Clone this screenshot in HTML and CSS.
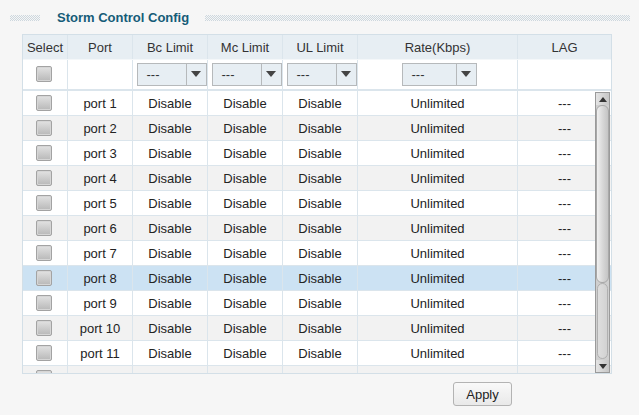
FILE: index.html
```html
<!DOCTYPE html>
<html>
<head>
<meta charset="utf-8">
<link rel="stylesheet" href="styles.css">
</head>
<body>
<div class="page">
  <div class="titlebar">
    <span class="dots dots-left"></span>
    <span class="title">Storm Control Config</span>
    <span class="dots dots-right"></span>
  </div>
  <div class="grid">
    <div class="row head">
      <div class="cell">Select</div>
      <div class="cell">Port</div>
      <div class="cell">Bc Limit</div>
      <div class="cell">Mc Limit</div>
      <div class="cell">UL Limit</div>
      <div class="cell">Rate(Kbps)</div>
      <div class="cell">LAG</div>
    </div>
    <div class="row filter">
      <div class="cell"><span class="chk"></span></div>
      <div class="cell"></div>
      <div class="cell"><span class="sel"><span class="sel-val">---</span><span class="sel-btn"><span class="tri"></span></span></span></div>
      <div class="cell"><span class="sel"><span class="sel-val">---</span><span class="sel-btn"><span class="tri"></span></span></span></div>
      <div class="cell"><span class="sel"><span class="sel-val">---</span><span class="sel-btn"><span class="tri"></span></span></span></div>
      <div class="cell"><span class="sel sel-wide"><span class="sel-val">---</span><span class="sel-btn"><span class="tri"></span></span></span></div>
      <div class="cell"></div>
    </div>
    <div class="body">
      <div class="row"><div class="cell"><span class="chk"></span></div><div class="cell">port 1</div><div class="cell">Disable</div><div class="cell">Disable</div><div class="cell">Disable</div><div class="cell">Unlimited</div><div class="cell">---</div></div>
      <div class="row alt"><div class="cell"><span class="chk"></span></div><div class="cell">port 2</div><div class="cell">Disable</div><div class="cell">Disable</div><div class="cell">Disable</div><div class="cell">Unlimited</div><div class="cell">---</div></div>
      <div class="row"><div class="cell"><span class="chk"></span></div><div class="cell">port 3</div><div class="cell">Disable</div><div class="cell">Disable</div><div class="cell">Disable</div><div class="cell">Unlimited</div><div class="cell">---</div></div>
      <div class="row alt"><div class="cell"><span class="chk"></span></div><div class="cell">port 4</div><div class="cell">Disable</div><div class="cell">Disable</div><div class="cell">Disable</div><div class="cell">Unlimited</div><div class="cell">---</div></div>
      <div class="row"><div class="cell"><span class="chk"></span></div><div class="cell">port 5</div><div class="cell">Disable</div><div class="cell">Disable</div><div class="cell">Disable</div><div class="cell">Unlimited</div><div class="cell">---</div></div>
      <div class="row alt"><div class="cell"><span class="chk"></span></div><div class="cell">port 6</div><div class="cell">Disable</div><div class="cell">Disable</div><div class="cell">Disable</div><div class="cell">Unlimited</div><div class="cell">---</div></div>
      <div class="row"><div class="cell"><span class="chk"></span></div><div class="cell">port 7</div><div class="cell">Disable</div><div class="cell">Disable</div><div class="cell">Disable</div><div class="cell">Unlimited</div><div class="cell">---</div></div>
      <div class="row hl"><div class="cell"><span class="chk"></span></div><div class="cell">port 8</div><div class="cell">Disable</div><div class="cell">Disable</div><div class="cell">Disable</div><div class="cell">Unlimited</div><div class="cell">---</div></div>
      <div class="row"><div class="cell"><span class="chk"></span></div><div class="cell">port 9</div><div class="cell">Disable</div><div class="cell">Disable</div><div class="cell">Disable</div><div class="cell">Unlimited</div><div class="cell">---</div></div>
      <div class="row alt"><div class="cell"><span class="chk"></span></div><div class="cell">port 10</div><div class="cell">Disable</div><div class="cell">Disable</div><div class="cell">Disable</div><div class="cell">Unlimited</div><div class="cell">---</div></div>
      <div class="row"><div class="cell"><span class="chk"></span></div><div class="cell">port 11</div><div class="cell">Disable</div><div class="cell">Disable</div><div class="cell">Disable</div><div class="cell">Unlimited</div><div class="cell">---</div></div>
      <div class="row alt"><div class="cell"><span class="chk"></span></div><div class="cell">port 12</div><div class="cell">Disable</div><div class="cell">Disable</div><div class="cell">Disable</div><div class="cell">Unlimited</div><div class="cell">---</div></div>
      <div class="scrollbar">
        <div class="sb-btn"><span class="sb-up"></span></div>
        <div class="sb-track">
          <div class="sb-thumb"></div>
          <div class="sb-rest"></div>
        </div>
        <div class="sb-btn"><span class="sb-down"></span></div>
      </div>
    </div>
  </div>
  <div class="footer">
    <button class="btn">Apply</button>
  </div>
</div>
</body>
</html>
```

FILE: styles.css
```css
* { box-sizing: border-box; }
html, body {
  margin: 0;
  padding: 0;
  background: #f6f6f6;
  font-family: "Liberation Sans", Arial, sans-serif;
  font-size: 13px;
  color: #2a2a2a;
}
.page {
  width: 639px;
  height: 415px;
  overflow: hidden;
}
.titlebar {
  display: flex;
  align-items: center;
  height: 34px;
  padding: 0 9px 0 10px;
}
.dots {
  height: 6px;
  background: conic-gradient(#cdd7de 25%, transparent 0 50%, #cdd7de 0 75%, transparent 0) 0 0 / 2px 2px;
  margin-top: 2px;
}
.dots-left { width: 30px; }
.dots-right { flex: 1; }
.title {
  font-weight: bold;
  font-size: 13px;
  color: #155c78;
  padding: 0 16px 0 17px;
}
.grid {
  margin-left: 22px;
  width: 590px;
  border: 1px solid #d3dfe7;
  background: #fff;
}
.row {
  display: grid;
  grid-template-columns: 45px 65px 75px 75px 75px 160px 93px;
  height: 25px;
  border-bottom: 1px solid #dbe5ec;
}
.cell {
  border-right: 1px solid #dbe5ec;
  display: flex;
  align-items: center;
  justify-content: center;
  white-space: nowrap;
}
.cell:last-child { border-right: 0; }
.head {
  background: #e7eef3;
  color: #333;
  border-bottom: 1px solid #f4f7f9;
}
.filter {
  height: 31px;
  background: #fff;
  border-bottom: 2px solid #dbe5ec;
}
.filter .cell { padding-bottom: 1px; }
.chk {
  display: block;
  width: 16px;
  height: 16px;
  border: 1px solid #a3a3a3;
  border-radius: 2px;
  background: linear-gradient(#e2e2e2, #b8b8b8);
  box-shadow: inset 0 0 0 1px #d6d6d6;
  margin-left: -3px;
}
.sel {
  display: flex;
  width: 70px;
  height: 23px;
  margin-left: 3px;
  border: 1px solid #b6b9bb;
  background: #e7eef3;
}
.sel-wide { width: 75px; }
.sel-val {
  flex: 1;
  padding-left: 9px;
  line-height: 21px;
  color: #333;
}
.sel-btn {
  width: 20px;
  border-left: 1px solid #b6b9bb;
  display: flex;
  align-items: center;
  justify-content: center;
}
.tri {
  width: 0;
  height: 0;
  border-left: 5px solid transparent;
  border-right: 5px solid transparent;
  border-top: 6px solid #444;
}
.body {
  position: relative;
  height: 282px;
  overflow: hidden;
}
.body .row .cell { color: #232323; }
.alt { background: #f2f2f2; }
.hl { background: #cce2f3; }
.scrollbar {
  position: absolute;
  top: 1px;
  right: 1px;
  width: 15px;
  height: 281px;
  display: flex;
  flex-direction: column;
  border: 1px solid #9a9a9a;
  background: #c8c8c8;
}
.sb-btn {
  height: 12px;
  background: linear-gradient(90deg, #e4e4e4, #c6c6c6);
  display: flex;
  align-items: center;
  justify-content: center;
}
.sb-up {
  width: 0; height: 0;
  border-left: 4px solid transparent;
  border-right: 4px solid transparent;
  border-bottom: 5px solid #333;
}
.sb-down {
  width: 0; height: 0;
  border-left: 4px solid transparent;
  border-right: 4px solid transparent;
  border-top: 5px solid #333;
}
.sb-track {
  flex: 1;
  display: flex;
  flex-direction: column;
  background: #cfcfcf;
}
.sb-thumb {
  height: 178px;
  border: 1px solid #a8a8a8;
  border-radius: 6px;
  background: linear-gradient(90deg, #f0f0f0, #d8d8d8 50%, #c4c4c4);
}
.sb-rest {
  flex: 1;
  border: 1px solid #b0b0b0;
  border-radius: 6px;
  background: linear-gradient(90deg, #dedede, #d2d2d2);
  margin: 0 1px 1px;
}
.footer {
  display: flex;
  justify-content: flex-end;
  padding: 8px 127px 0 0;
}
.btn {
  width: 59px;
  height: 24px;
  border: 1px solid #b3b3b3;
  border-radius: 3px;
  background: linear-gradient(#f9f9f9, #e9e9e9);
  font-family: "Liberation Sans", Arial, sans-serif;
  font-size: 13px;
  color: #222;
  padding: 0;
}
```
